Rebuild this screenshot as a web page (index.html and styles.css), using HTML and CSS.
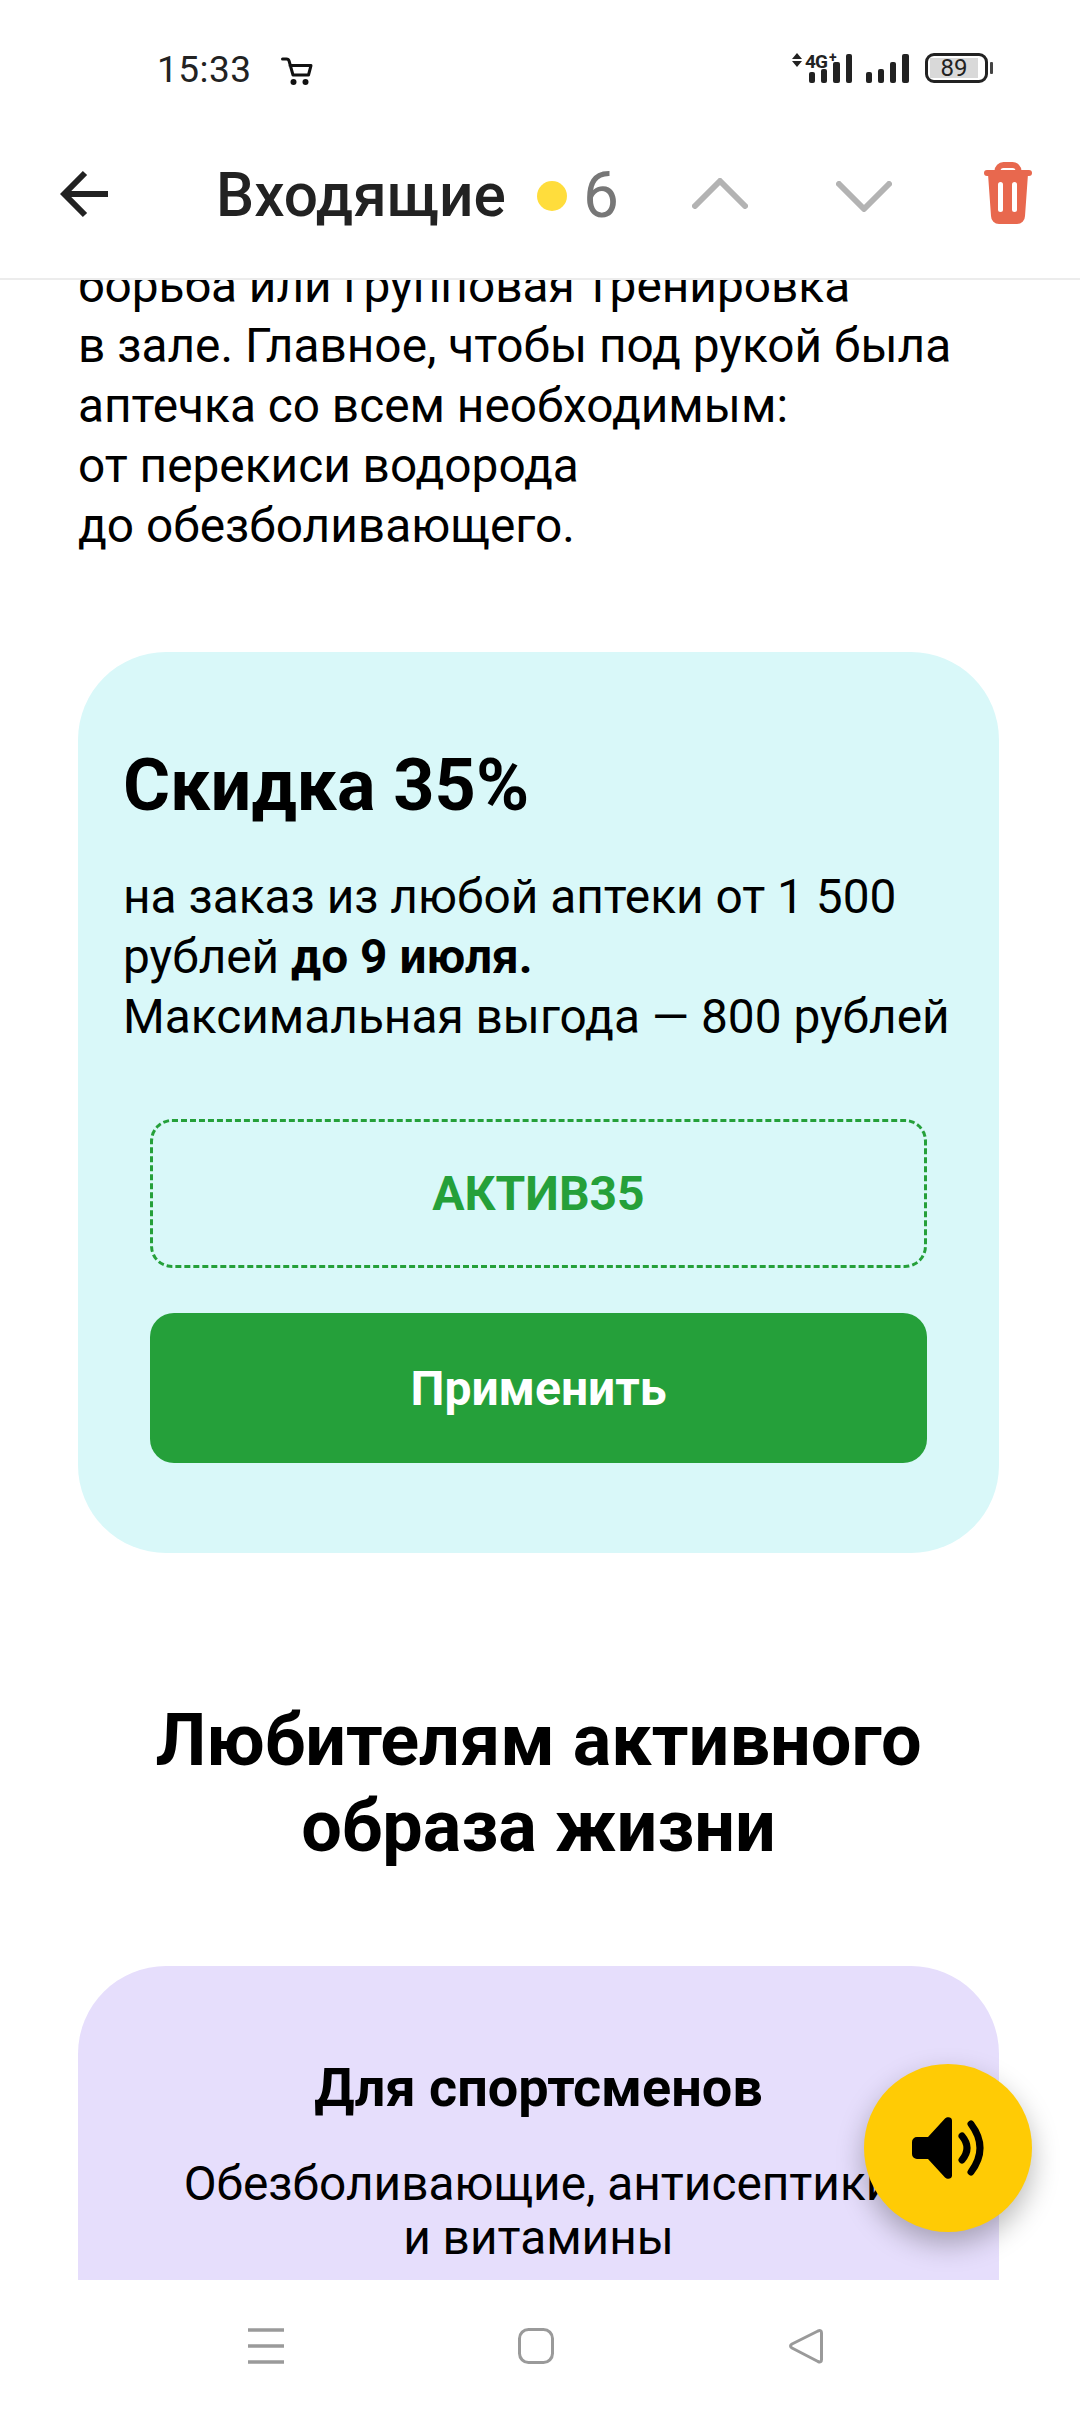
FILE: index.html
```html
<!DOCTYPE html>
<html lang="ru">
<head>
  <meta charset="UTF-8">
  <meta name="viewport" content="width=device-width, initial-scale=1.0">
  <title>Входящие</title>
  <link rel="stylesheet" href="styles.css">
</head>
<body>
  <div class="screen">
    <header class="top">
      <div class="status-bar">
        <div class="status-left">
          <span class="clock">15:33</span>
          <svg class="cart" viewBox="0 0 32 29" width="32" height="29">
            <path d="M1.500 2h4c1.500 0 2.200.7 2.600 2L12 18h15.500L30 8.500H9" fill="none" stroke="#111" stroke-width="3" stroke-linecap="round" stroke-linejoin="round"/>
            <circle cx="12.500" cy="25" r="3" fill="#111"/>
            <circle cx="24.500" cy="25" r="3" fill="#111"/>
          </svg>
        </div>
        <div class="status-right">
          <svg class="signal" viewBox="0 0 120 32" width="120" height="32">
            <path d="M1 7l5-6 5 6zM1 9l5 6 5-6z" fill="#222"/>
            <text x="14" y="16" class="net">4G</text>
            <text x="38" y="10" class="net-plus">+</text>
            <g fill="#222">
              <rect x="18" y="20" width="6" height="11" rx="2"/>
              <rect x="30" y="17" width="6" height="14" rx="2"/>
              <rect x="42" y="10" width="7" height="21" rx="2"/>
              <rect x="55" y="2" width="6" height="29" rx="2"/>
              <rect x="75" y="20" width="6" height="11" rx="2"/>
              <rect x="87" y="17" width="6" height="14" rx="2"/>
              <rect x="99" y="10" width="6" height="21" rx="2"/>
              <rect x="111" y="2" width="7" height="29" rx="2"/>
            </g>
          </svg>
          <div class="battery">
            <div class="battery-body"><span class="battery-level">89</span></div>
            <div class="battery-tip"></div>
          </div>
        </div>
      </div>
      <div class="toolbar">
        <svg class="back" viewBox="0 0 48 48" width="48" height="48">
          <path d="M25 3L4.200 24 25 45M4.200 24H48" fill="none" stroke="#222" stroke-width="6" stroke-linejoin="miter"/>
        </svg>
        <div class="title-group">
          <span class="title">Входящие</span>
          <span class="dot"></span>
          <span class="count">6</span>
        </div>
        <svg class="chevron chevron-up" viewBox="0 0 56 31" width="56" height="31">
          <path d="M3 28L28 3l25 25" fill="none" stroke="#b3b3b3" stroke-width="6" stroke-linecap="round" stroke-linejoin="round"/>
        </svg>
        <svg class="chevron chevron-down" viewBox="0 0 56 31" width="56" height="31">
          <path d="M3 3l25 25L53 3" fill="none" stroke="#b3b3b3" stroke-width="6" stroke-linecap="round" stroke-linejoin="round"/>
        </svg>
        <svg class="trash" viewBox="0 0 48 62" width="48" height="62">
          <path d="M13.500 11V9a6 6 0 0 1 6-6h9a6 6 0 0 1 6 6v2" fill="none" stroke="#e8684e" stroke-width="6"/>
          <rect x="0" y="8" width="48" height="6" rx="3" fill="#e8684e"/>
          <path d="M4 12h40l-3 42a8 8 0 0 1-8 8H15a8 8 0 0 1-8-8z" fill="#e8684e"/>
          <rect x="14" y="20" width="5" height="30" rx="2.500" fill="#fff"/>
          <rect x="28" y="20" width="5" height="30" rx="2.500" fill="#fff"/>
        </svg>
      </div>
    </header>

    <main class="content">
      <p class="intro">борьба или групповая тренировка<br>в зале. Главное, чтобы под рукой была<br>аптечка со всем необходимым:<br>от перекиси водорода<br>до обезболивающего.</p>

      <section class="promo">
        <h2 class="promo-title">Скидка 35%</h2>
        <p class="promo-text">на заказ из любой аптеки от 1 500 рублей <b>до 9 июля.</b><br>Максимальная выгода — 800 рублей</p>
        <div class="promo-code">АКТИВ35</div>
        <a class="promo-btn">Применить</a>
      </section>

      <h2 class="section-title">Любителям активного<br>образа жизни</h2>

      <section class="offer">
        <h3 class="offer-title">Для спортсменов</h3>
        <p class="offer-text">Обезболивающие, антисептики<br>и витамины</p>
      </section>
    </main>

    <button class="fab">
      <svg viewBox="0 0 72 64" width="72" height="64">
        <path d="M5 21h11L33 2.500c2-2 7-2 7 2v55c0 4-5 4-7 2L16 43H5a5 5 0 0 1-5-5V26a5 5 0 0 1 5-5z" fill="#000"/>
        <path d="M50 20q10 12 0 24M59 8q18 24 0 48" fill="none" stroke="#000" stroke-width="7" stroke-linecap="round"/>
      </svg>
    </button>

    <nav class="nav-bar">
      <svg viewBox="0 0 36 36" width="36" height="36">
        <path d="M0 2h36M0 18h36M0 34h36" stroke="#9a9a9a" stroke-width="3.500"/>
      </svg>
      <svg viewBox="0 0 36 36" width="36" height="36">
        <rect x="1.500" y="1.500" width="33" height="33" rx="9" fill="none" stroke="#9a9a9a" stroke-width="3"/>
      </svg>
      <svg viewBox="0 0 35 36" width="35" height="36">
        <path d="M30 3L4 16q-3 2 0 4l26 13.500q3.500 1.500 3.500-2V5q0-3.500-3.500-2z" fill="none" stroke="#9a9a9a" stroke-width="3" stroke-linejoin="round"/>
      </svg>
    </nav>
  </div>
</body>
</html>
```

FILE: styles.css
```css
:root {
  --green: #25a03a;
  --text: #000;
  --dark: #222;
}

* {
  box-sizing: border-box;
}

html, body {
  margin: 0;
  padding: 0;
}

body {
  font-family: Roboto, 'Noto Sans', sans-serif;
  background-color: #fff;
  color: var(--text);
}

.screen {
  position: relative;
  width: 1080px;
  height: 2412px;
  display: flex;
  flex-direction: column;
  overflow: hidden;
}

.top {
  height: 280px;
  flex: none;
  background-color: #fff;
  border-bottom: 2px solid #ececec;
  position: relative;
  z-index: 2;
}

.status-bar {
  height: 138px;
  padding: 50px 87px 0 157px;
  display: flex;
  justify-content: space-between;
  align-items: flex-start;
}

.status-left {
  display: flex;
  align-items: center;
  gap: 29px;
}

.clock {
  font-size: 37px;
  line-height: 40px;
  color: #222;
  letter-spacing: 0.5px;
}

.cart {
  margin-top: 2px;
}

.status-right {
  display: flex;
  align-items: center;
  gap: 14px;
  margin-top: 2px;
}

.signal {
  overflow: visible;
}

.net {
  font-size: 19px;
  font-weight: 700;
  fill: #222;
  letter-spacing: -1px;
}

.net-plus {
  font-size: 14px;
  font-weight: 700;
  fill: #222;
}

.battery {
  display: flex;
  align-items: center;
  gap: 2px;
}

.battery-body {
  width: 63px;
  height: 30px;
  border: 3px solid #222;
  border-radius: 9px;
  padding: 2px 7px 2px 2px;
  display: flex;
}

.battery-level {
  flex: 1;
  background-color: #d9d9d9;
  font-size: 24px;
  line-height: 20px;
  text-align: center;
  color: #222;
}

.battery-tip {
  width: 3px;
  height: 12px;
  background-color: #444;
  border-radius: 1px;
}

.toolbar {
  height: 110px;
  padding: 0 48px 0 60px;
  display: flex;
  align-items: center;
}

.back {
  flex: none;
  margin-top: 2px;
}

.title-group {
  margin-left: 108px;
  width: 420px;
  display: flex;
  align-items: center;
  margin-top: 5px;
}

.title {
  font-size: 60.4px;
  font-weight: 500;
  color: var(--dark);
}

.dot {
  width: 30px;
  height: 30px;
  border-radius: 50%;
  background-color: #ffdd3c;
  margin-left: 31px;
}

.count {
  font-size: 64px;
  color: #777;
  margin-left: 16px;
}

.chevron-up {
  margin-left: 56px;
}

.chevron-down {
  margin-left: 88px;
  margin-top: 6px;
}

.trash {
  margin-left: 92px;
}

.content {
  flex: 1;
  min-height: 0;
  overflow: hidden;
  padding: 0 81px 0 78px;
}

.intro {
  margin: -24px 0 0;
  font-size: 47.8px;
  line-height: 60px;
}

.promo {
  margin-top: 96px;
  background-color: #d9f8f9;
  border-radius: 88px;
  padding: 95px 45px 90px;
  height: 901px;
}

.promo-title {
  margin: 0;
  font-size: 72px;
  line-height: 78px;
  font-weight: 700;
}

.promo-text {
  margin: 42px 0 0;
  font-size: 47.8px;
  line-height: 60px;
}

.promo-code {
  margin: 72px 27px 0;
  height: 149px;
  border: 3px dashed var(--green);
  border-radius: 22px;
  display: flex;
  align-items: center;
  justify-content: center;
  font-size: 48px;
  font-weight: 700;
  color: var(--green);
}

.promo-btn {
  margin: 45px 27px 0;
  height: 150px;
  background-color: var(--green);
  border-radius: 24px;
  display: flex;
  align-items: center;
  justify-content: center;
  font-size: 48px;
  font-weight: 700;
  color: #fff;
}

.section-title {
  margin: 145px 0 0;
  font-size: 72px;
  line-height: 86px;
  font-weight: 700;
  text-align: center;
}

.offer {
  margin-top: 96px;
  background-color: #e6defc;
  border-radius: 88px 88px 0 0;
  padding: 92px 20px 0;
  height: 400px;
  text-align: center;
}

.offer-title {
  margin: 0;
  font-size: 54px;
  line-height: 60px;
  font-weight: 700;
}

.offer-text {
  margin: 39px 0 0;
  font-size: 47.8px;
  line-height: 54px;
}

.fab {
  position: absolute;
  left: 864px;
  top: 2064px;
  width: 168px;
  height: 168px;
  padding: 0;
  border: 0;
  border-radius: 50%;
  background-color: #ffcb05;
  box-shadow: 0 12px 28px rgba(0, 0, 0, 0.28);
  display: flex;
  align-items: center;
  justify-content: center;
  z-index: 3;
}

.nav-bar {
  height: 132px;
  flex: none;
  background-color: #fff;
  display: flex;
  align-items: center;
  padding: 0 257px 0 248px;
  justify-content: space-between;
  position: relative;
  z-index: 2;
}
```
